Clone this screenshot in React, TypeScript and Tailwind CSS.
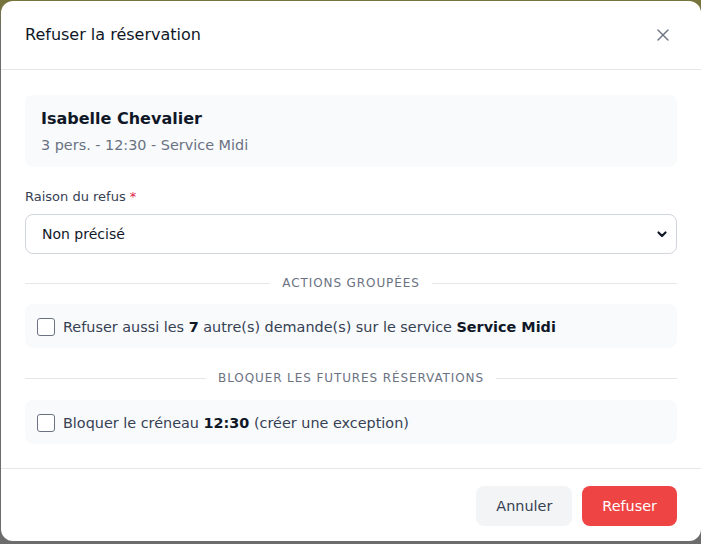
import { X } from 'lucide-react';

const font = { fontFamily: '"DejaVu Sans", Verdana, sans-serif' };

const SectionDivider: React.FC<{ label: string; className?: string }> = ({ label, className }) => (
  <div className={`flex items-center gap-3 ${className ?? ''}`}>
    <div className="h-px flex-1 bg-gray-200" />
    <span className="text-xs leading-4 uppercase tracking-[0.9px] text-gray-500">{label}</span>
    <div className="h-px flex-1 bg-gray-200" />
  </div>
);

const CheckRow: React.FC<{ children: React.ReactNode }> = ({ children }) => (
  <label className="flex items-center gap-2 rounded-lg bg-slate-50 px-3 pt-[13px] pb-[11px] text-[14.4px] leading-5 text-gray-700">
    <input
      type="checkbox"
      className="h-[18px] w-[18px] shrink-0 appearance-none rounded-[3px] border border-gray-500 bg-white"
    />
    <span>{children}</span>
  </label>
);

export default function App() {
  return (
    <div
      className="min-h-screen bg-linear-to-b from-[#77733c] from-[1%] to-[#6c6c6c] to-[6%] pl-px pt-px pb-[2px]"
      style={font}
    >
      <div className="flex flex-col rounded-xl bg-white">
        {/* header */}
        <div className="flex items-center justify-between border-b border-gray-200 px-6 py-5">
          <h2 className="text-base leading-7 text-gray-900">Refuser la réservation</h2>
          <button className="p-1 text-gray-500">
            <X size={20} strokeWidth={1.6} />
          </button>
        </div>

        {/* body */}
        <div className="flex flex-col px-6 pt-[25px] pb-6">
          <div className="rounded-lg bg-slate-50 px-4 py-3">
            <h3 className="text-base leading-6 font-bold text-gray-900">Isabelle Chevalier</h3>
            <p className="mt-1 text-[14.4px] leading-5 text-gray-500">3 pers. - 12:30 - Service Midi</p>
          </div>

          <label className="mt-5 mb-[7px] text-[13px] leading-5 text-gray-700">
            Raison du refus <span className="text-[#e11d48]">*</span>
          </label>
          <div className="relative">
            <select className="h-10 w-full appearance-none rounded-lg border border-gray-300 bg-white pl-4 pr-10 text-sm text-gray-900 outline-none">
              <option>Non précisé</option>
              <option>Complet</option>
              <option>Fermeture exceptionnelle</option>
            </select>
            <svg
              className="pointer-events-none absolute right-[9px] top-1/2 -translate-y-1/2"
              width="12"
              height="12"
              viewBox="0 0 12 12"
              fill="none"
            >
              <path d="M2.5 4.5 6 8l3.5-3.5" stroke="#111827" strokeWidth="2.2" strokeLinecap="round" strokeLinejoin="round" />
            </svg>
          </div>

          <SectionDivider label="Actions groupées" className="mt-[21px] mb-[13px]" />
          <CheckRow>
            Refuser aussi les <b className="text-gray-900">7</b> autre(s) demande(s) sur le service{' '}
            <b className="text-gray-900">Service Midi</b>
          </CheckRow>

          <SectionDivider label="Bloquer les futures réservations" className="mt-[22px] mb-[14px]" />
          <CheckRow>
            Bloquer le créneau <b className="text-gray-900">12:30</b> (créer une exception)
          </CheckRow>
        </div>

        {/* footer */}
        <div className="flex justify-end gap-2.5 border-t border-gray-200 px-6 pt-[17px] pb-[15px]">
          <button className="rounded-lg bg-gray-100 px-5 py-2.5 text-[14.4px] leading-5 text-gray-700">Annuler</button>
          <button className="rounded-lg bg-[#ef4444] px-5 py-2.5 text-[14.4px] leading-5 text-white">Refuser</button>
        </div>
      </div>
    </div>
  );
}
